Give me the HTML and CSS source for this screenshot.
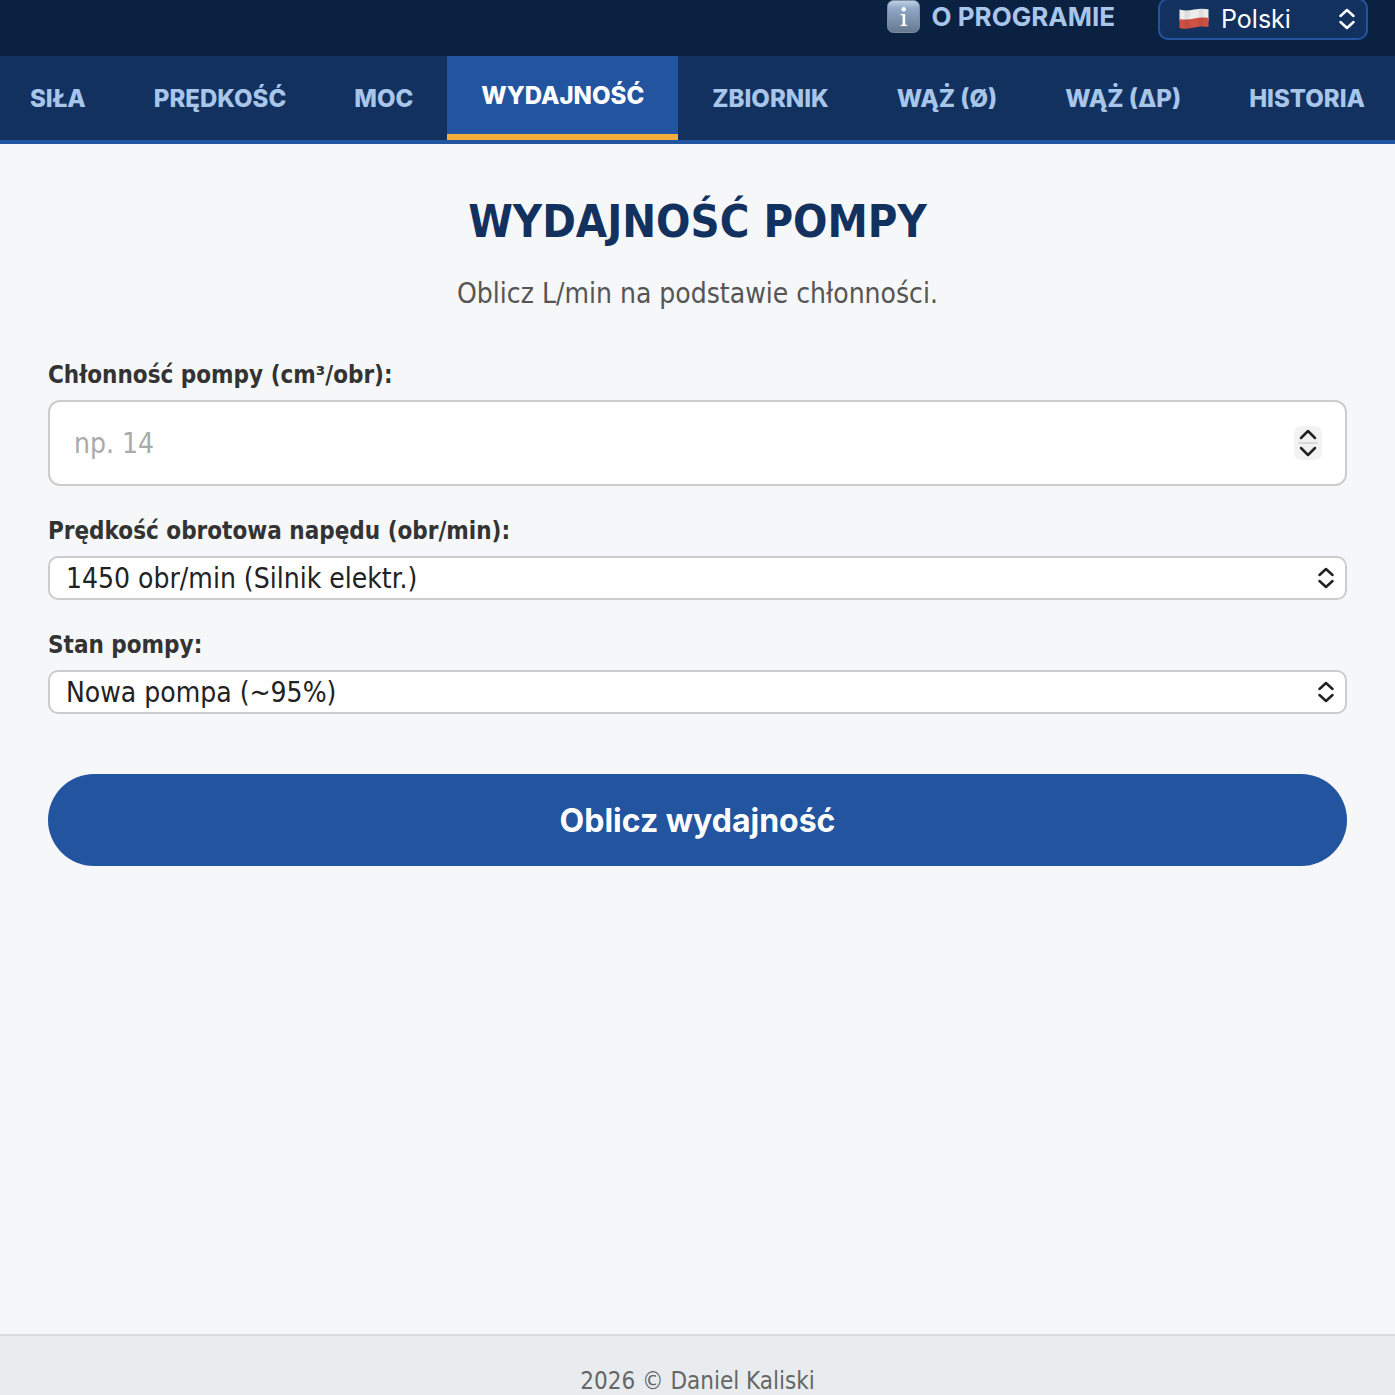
FILE: index.html
```html
<!DOCTYPE html>
<html lang="pl">
<head>
    <meta charset="UTF-8">
    <meta name="viewport" content="width=device-width, initial-scale=1.0">
    <title>Wydajność pompy</title>
    <link rel="stylesheet" href="styles.css">
</head>
<body>

    <header class="top-bar">
        <button type="button" class="about-btn">
            <svg class="info-icon" viewBox="0 0 33 33" aria-hidden="true">
                <defs>
                    <linearGradient id="infoFill" x1="0" y1="0" x2="0" y2="1">
                        <stop offset="0" stop-color="#c3d2e3"/>
                        <stop offset=".25" stop-color="#8ea8c6"/>
                        <stop offset="1" stop-color="#66788f"/>
                    </linearGradient>
                </defs>
                <rect x=".5" y=".5" width="32" height="32" rx="6" fill="url(#infoFill)" stroke="#7d8da0"/>
                <circle cx="16.7" cy="9.3" r="2.2" fill="#fff"/>
                <path d="M13.500 14h4.700v10.800h2v1.200h-6.600v-1.200h2v-9.500h-2.100z" fill="#fff"/>
            </svg>
            O PROGRAMIE
        </button>
        <div class="select-wrap lang">
            <svg class="flag" viewBox="0 0 30 21" aria-hidden="true">
                <path d="M.5 1.500C6 3 10 2.500 15 1.500S24 .3 29.500 1.200V13H.5z" fill="#ececec"/>
                <path d="M.5 11C6 12 10 11.500 15 10.500S24 9.300 29.500 10V19C24 18 20 18.500 15 19.600S6 21.500 .5 20z" fill="#cf5144"/>
                <path d="M8 2.500v18M22 1v17.500" stroke="#000" stroke-opacity=".06" stroke-width="5"/>
            </svg>
            <select id="lang" aria-label="Język">
                <option>Polski</option>
                <option>English</option>
            </select>
            <svg class="arrows" viewBox="0 0 16 22" aria-hidden="true"><path d="M1.500 8 8 2l6.500 6M1.500 14 8 20l6.500-6"/></svg>
        </div>
    </header>

    <nav class="tabs">
        <button type="button" class="tab">SIŁA</button>
        <button type="button" class="tab">PRĘDKOŚĆ</button>
        <button type="button" class="tab">MOC</button>
        <button type="button" class="tab active">WYDAJNOŚĆ</button>
        <button type="button" class="tab">ZBIORNIK</button>
        <button type="button" class="tab">WĄŻ (Ø)</button>
        <button type="button" class="tab">WĄŻ (ΔP)</button>
        <button type="button" class="tab">HISTORIA</button>
    </nav>

    <main class="content">
        <h1>WYDAJNOŚĆ POMPY</h1>
        <p class="desc">Oblicz L/min na podstawie chłonności.</p>

        <form id="pumpForm">
            <div class="field">
                <label for="displacement">Chłonność pompy (cm³/obr):</label>
                <div class="input-wrap">
                    <input type="number" id="displacement" placeholder="np. 14">
                    <svg class="stepper" viewBox="0 0 28 34" aria-hidden="true">
                        <rect width="28" height="34" rx="7" fill="#f2f2f2"/>
                        <path d="M4.500 17h19" stroke="#d9d9d9" stroke-width="2"/>
                        <path class="chevrons" d="M7 12l7-7 7 7M7 22l7 7 7-7"/>
                    </svg>
                </div>
            </div>

            <div class="field">
                <label for="speed">Prędkość obrotowa napędu (obr/min):</label>
                <div class="select-wrap">
                    <select id="speed">
                        <option>1450 obr/min (Silnik elektr.)</option>
                    </select>
                    <svg class="arrows" viewBox="0 0 16 22" aria-hidden="true"><path d="M1.500 8 8 2l6.500 6M1.500 14 8 20l6.500-6"/></svg>
                </div>
            </div>

            <div class="field">
                <label for="condition">Stan pompy:</label>
                <div class="select-wrap">
                    <select id="condition">
                        <option>Nowa pompa (~95%)</option>
                    </select>
                    <svg class="arrows" viewBox="0 0 16 22" aria-hidden="true"><path d="M1.500 8 8 2l6.500 6M1.500 14 8 20l6.500-6"/></svg>
                </div>
            </div>

            <button type="button" class="calc-btn">Oblicz wydajność</button>
        </form>
    </main>

    <footer class="footer">2026 © Daniel Kaliski</footer>

</body>
</html>
```

FILE: styles.css
```css
* {
    box-sizing: border-box;
}
body {
    margin: 0;
    min-height: 100vh;
    display: flex;
    flex-direction: column;
    overflow-x: hidden;
    background: #f5f7f9;
    color: #333;
    font-family: "DejaVu Sans Condensed", Tahoma, Verdana, sans-serif;
}
button {
    font-family: Inter, sans-serif;
    font-weight: 700;
    border: none;
    cursor: pointer;
}

/* top bar */
.top-bar {
    height: 56px;
    padding: 0 27px 16px;
    display: flex;
    justify-content: flex-end;
    align-items: flex-end;
    gap: 43px;
    overflow: hidden;
    background: #0a2142;
}
.about-btn {
    display: flex;
    align-items: center;
    gap: 12px;
    height: 48px;
    padding: 0;
    background: none;
    color: #a8c5ea;
    font-size: 26px;
}
.info-icon {
    width: 33px;
    height: 33px;
}

/* selects */
.select-wrap,
.input-wrap {
    position: relative;
}
.select-wrap select {
    appearance: none;
    display: block;
    width: 100%;
    height: 44px;
    padding: 0 40px 0 16px;
    border: 2px solid #ccc;
    border-radius: 10px;
    background: #fff;
    color: #222;
    font-family: inherit;
    font-size: 28px;
}
.arrows {
    position: absolute;
    right: 13px;
    top: 11px;
    width: 16px;
    height: 22px;
    pointer-events: none;
    color: #222;
}
.arrows path,
.chevrons {
    fill: none;
    stroke: currentColor;
    stroke-width: 2.5;
    stroke-linecap: round;
    stroke-linejoin: round;
}
.lang {
    width: 210px;
    flex-shrink: 0;
}
.select-wrap.lang select {
    height: 42px;
    padding: 0 40px 0 61px;
    border-color: #2354a0;
    background: #12315f;
    color: #fff;
    font-family: Inter, sans-serif;
    font-size: 25px;
}
.lang .arrows {
    top: 10px;
    color: #fff;
}
.flag {
    position: absolute;
    left: 21px;
    top: 10px;
    width: 30px;
    height: 21px;
    pointer-events: none;
}

/* tabs */
.tabs {
    display: flex;
    justify-content: center;
    background: #12315f;
    border-bottom: 4px solid #2354a0;
}
.tab {
    flex-shrink: 0;
    height: 84px;
    padding: 0 34px;
    background: none;
    color: #a8c5ea;
    font-size: 24px;
    font-weight: 800;
}
.tab.active {
    background: #2354a0;
    color: #fff;
    border-bottom: 6px solid #f5ae3b;
}

/* content */
.content {
    flex: 1;
    padding: 48px;
}
h1 {
    margin: 0 0 26px;
    text-align: center;
    color: #12315f;
    font-size: 45px;
    line-height: 60px;
}
.desc {
    margin: 0 0 48px;
    text-align: center;
    color: #555;
    font-size: 28px;
    line-height: 32px;
}
.field {
    margin-bottom: 28px;
}
.field label {
    display: block;
    margin-bottom: 8px;
    font-size: 24px;
    font-weight: 700;
    line-height: 34px;
}
.input-wrap input {
    appearance: textfield;
    display: block;
    width: 100%;
    height: 86px;
    padding: 0 64px 0 24px;
    border: 2px solid #ccc;
    border-radius: 12px;
    background: #fff;
    font-family: inherit;
    font-size: 28px;
}
.input-wrap input::placeholder {
    color: #aaa;
}
.stepper {
    position: absolute;
    right: 25px;
    top: 26px;
    width: 28px;
    height: 34px;
    pointer-events: none;
    color: #222;
}
.calc-btn {
    display: block;
    width: 100%;
    height: 92px;
    margin-top: 60px;
    border-radius: 46px;
    background: #2354a0;
    color: #fff;
    font-size: 32px;
}

.footer {
    padding: 32px 0 0;
    border-top: 2px solid #d8dbde;
    background: #e8ecef;
    color: #666;
    text-align: center;
    font-size: 24px;
    line-height: 27px;
}
```
